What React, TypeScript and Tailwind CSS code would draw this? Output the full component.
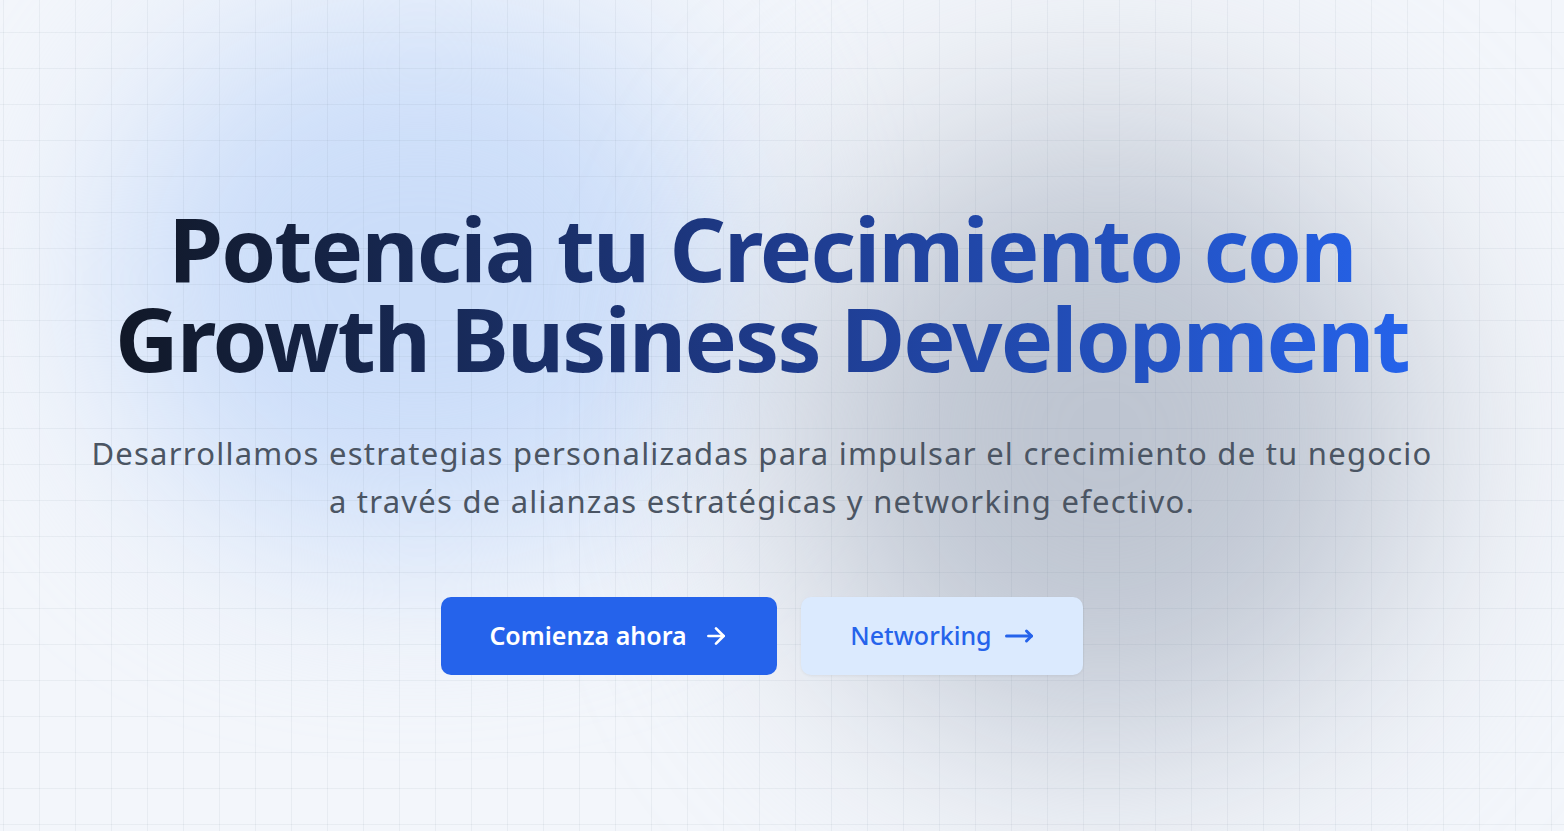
import { ArrowRight, MoveRight } from "lucide-react";

export default function App() {
  return (
    <section className="relative min-h-[831px] overflow-hidden bg-[#f3f6fb] font-['Noto_Sans',sans-serif]">
      {/* Soft glows */}
      <div className="absolute left-[110px] top-[10px] w-[620px] h-[540px] rounded-full bg-[#cbddf9] blur-[90px]" />
      <div className="absolute left-[790px] top-[120px] w-[630px] h-[630px] rounded-full bg-[#bec5d1] blur-[110px]" />

      {/* Grid */}
      <div className="absolute inset-0 bg-[linear-gradient(to_right,rgba(100,116,139,0.08)_1px,transparent_1px),linear-gradient(to_bottom,rgba(100,116,139,0.08)_1px,transparent_1px)] bg-[size:36px_36px] bg-[position:3px_32px]" />

      <div className="relative z-10 flex flex-col items-center pr-10 pt-[203px] text-center">
        <h1 className="inline-block text-[88px] leading-[90px] font-bold tracking-[-0.021em] bg-gradient-to-r from-[#111827] via-[#1e3a8a] to-[#2563eb] bg-clip-text text-transparent">
          Potencia tu Crecimiento con
          <br />
          Growth Business Development
        </h1>

        <p className="mt-[46px] text-[31px] leading-[48px] tracking-[0.04em] text-[#4b5563]">
          Desarrollamos estrategias personalizadas para impulsar el crecimiento de tu negocio
          <br />
          a través de alianzas estratégicas y networking efectivo.
        </p>

        <div className="mt-[72px] flex gap-6">
          <button className="flex h-[78px] w-[336px] items-center justify-center gap-4 rounded-[10px] bg-[#2563eb] text-[25px] font-semibold text-white">
            Comienza ahora
            <ArrowRight size={26} strokeWidth={2.5} />
          </button>
          <button className="flex h-[78px] w-[282px] items-center justify-center gap-3 rounded-[10px] bg-[#dbeafe] text-[25px] font-medium text-[#2563eb] shadow-[0_1px_3px_rgba(0,0,0,0.06)]">
            Networking
            <MoveRight size={30} strokeWidth={2.4} />
          </button>
        </div>
      </div>
    </section>
  );
}
